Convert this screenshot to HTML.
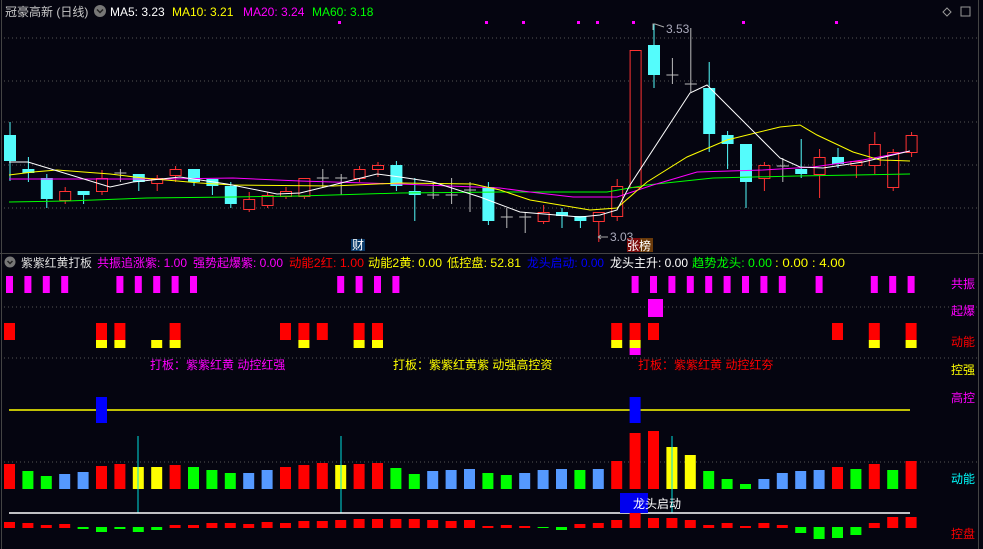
<!DOCTYPE html><html><head><meta charset="utf-8"><style>
body{margin:0;background:#050510;width:983px;height:549px;overflow:hidden;font-family:"Liberation Sans","Noto Sans CJK SC",sans-serif}
svg{position:absolute;left:0;top:0}
text{font-family:"Liberation Sans","Noto Sans CJK SC",sans-serif;font-size:12px}
</style></head><body>
<svg id="s" width="983" height="549" xmlns="http://www.w3.org/2000/svg">
<rect width="983" height="549" fill="#050510"/>
<g id="g"></g>
<line x1="0" y1="253.5" x2="983" y2="253.5" stroke="#444"/>
<line x1="1.5" y1="0" x2="1.5" y2="549" stroke="#444"/>
<line x1="978.5" y1="0" x2="978.5" y2="549" stroke="#444"/>
<text x="5" y="16" fill="#c8c8c8">冠豪高新 (日线)</text>
<circle cx="100" cy="11" r="6" fill="#777"/><path d="M97 9.5l3 3 3-3" stroke="#222" stroke-width="1.5" fill="none"/>
<text x="110" y="16" fill="#fff">MA5: 3.23</text>
<text x="172" y="16" fill="#ff0">MA10: 3.21</text>
<text x="243" y="16" fill="#f0f">MA20: 3.24</text>
<text x="312" y="16" fill="#0f0">MA60: 3.18</text>
<path d="M947 8l4 4-4 4-4-4z" stroke="#999" fill="none"/><rect x="961" y="7" width="9" height="9" stroke="#999" fill="none"/>
<circle cx="10" cy="262" r="5.5" fill="#777"/><path d="M7.5 261l2.5 2.5 2.5-2.5" stroke="#222" stroke-width="1.5" fill="none"/>
<text x="21" y="267" fill="#ddd" textLength="71" lengthAdjust="spacingAndGlyphs">紫紫红黄打板</text>
<text x="97" y="267" fill="#f0f" textLength="90" lengthAdjust="spacingAndGlyphs">共振追涨紫: 1.00</text>
<text x="193" y="267" fill="#f0f" textLength="90" lengthAdjust="spacingAndGlyphs">强势起爆紫: 0.00</text>
<text x="289" y="267" fill="#f00" textLength="75" lengthAdjust="spacingAndGlyphs">动能2红: 1.00</text>
<text x="368" y="267" fill="#ff0" textLength="74" lengthAdjust="spacingAndGlyphs">动能2黄: 0.00</text>
<text x="447" y="267" fill="#ff0" textLength="74" lengthAdjust="spacingAndGlyphs">低控盘: 52.81</text>
<text x="527" y="267" fill="#00f" textLength="77" lengthAdjust="spacingAndGlyphs">龙头启动: 0.00</text>
<text x="610" y="267" fill="#fff" textLength="78" lengthAdjust="spacingAndGlyphs">龙头主升: 0.00</text>
<text x="692" y="267" fill="#0f0" textLength="80" lengthAdjust="spacingAndGlyphs">趋势龙头: 0.00</text>
<text x="775" y="267" fill="#ff0" textLength="70" lengthAdjust="spacingAndGlyphs">: 0.00 : 4.00</text>
<text x="150" y="369" fill="#f0f">打板：紫紫红黄  动控红强</text>
<text x="393" y="369" fill="#ff0">打板：紫紫红黄紫  动强高控资</text>
<text x="638" y="369" fill="#f00">打板：紫紫红黄  动控红夯</text>
<text x="951" y="288" fill="#f0f">共振</text>
<text x="951" y="315" fill="#f0f">起爆</text>
<text x="951" y="346" fill="#f00">动能</text>
<text x="951" y="374" fill="#ff0">控强</text>
<text x="951" y="402" fill="#f0f">高控</text>
<text x="951" y="483" fill="#0ff">动能</text>
<text x="951" y="538" fill="#f00">控盘</text>
<rect x="351" y="239" width="14" height="12" fill="#0a3a6a"/><text x="352" y="249" fill="#fff" font-size="11">财</text>
<rect x="627" y="238" width="13" height="14" fill="#7a0a0a"/><rect x="640" y="238" width="13" height="14" fill="#6a3a0a"/>
<text x="627" y="250" fill="#fff">张榜</text>
<text x="666" y="33" fill="#aab">3.53</text><path d="M653 30v-6h2l9 3" stroke="#aaa" fill="none"/>
<text x="610" y="241" fill="#aab">3.03</text><path d="M598 237h10M598 237l3-2M598 237l3 2" stroke="#aaa" fill="none"/>
<rect x="620" y="493" width="28" height="20" fill="#0000ee"/>
<text x="633" y="508" fill="#fff">龙头启动</text>
</svg>
<script>
const g=document.getElementById('g');let h='';
const X=i=>4+18.4*i;
[38,81,122,165,208,307,358,462].forEach(y=>h+=`<line x1="4" y1="${y}" x2="978" y2="${y}" stroke="#555" stroke-dasharray="1 3"/>`);
[339,486,523,578,597,633,743,836].forEach(x=>h+=`<rect x="${x-1}" y="21" width="3" height="3" fill="#f0f"/>`);
const C=[['c',135,161,122,181],['c',169,173,157,182],['c',178,199,174,208],['r',191,200,187,204],['c',191,195,191,204],['r',178,191,170,195],['x',173,173,169,182],['c',174,182,174,191],['r',178,183,175,191],['r',169,175,166,182],['c',169,182,169,186],['c',179,186,179,195],['c',186,204,182,208],['r',199,209,192,212],['r',195,205,192,208],['r',191,196,187,199],['r',178,196,178,199],['x',178,178,169,187],['x',178,178,174,195],['r',169,178,166,182],['r',165,169,162,177],['c',165,186,161,191],['c',191,195,178,221],['x',195,195,182,199],['x',195,195,178,204],['x',190,190,182,212],['c',187,221,182,225],['x',217,217,208,228],['x',217,217,212,233],['r',212,221,205,224],['c',212,216,208,228],['c',216,221,216,228],['r',212,221,212,242],['r',186,216,179,221],['r',50,187,50,187],['c',45,75,24,88],['x',75,75,58,84],['x',84,84,28,92],['c',88,134,62,152],['c',135,144,131,169],['c',144,182,144,208],['r',165,178,162,191],['x',166,166,158,182],['c',169,174,139,178],['r',157,174,149,198],['c',157,164,148,168],['r',161,165,161,178],['r',144,165,132,174],['r',152,187,149,191],['r',135,152,132,157]];
C.forEach((c,i)=>{const x=X(i),cx=x+6;const col=c[0]=='c'?'#54fcfc':c[0]=='r'?'#ff3232':'#bbb';
h+=`<line x1="${cx}" y1="${c[3]}" x2="${cx}" y2="${c[4]}" stroke="${col}"/>`;
if(c[0]=='c')h+=`<rect x="${x}" y="${c[1]}" width="12" height="${Math.max(1,c[2]-c[1])}" fill="${col}"/>`;
else if(c[0]=='r')h+=`<rect x="${x+.5}" y="${c[1]+.5}" width="11" height="${Math.max(1,c[2]-c[1])}" fill="#050510" stroke="${col}"/>`;
else h+=`<line x1="${x}" y1="${c[1]}" x2="${x+12}" y2="${c[1]}" stroke="${col}"/>`;});
const L=(p,c)=>h+=`<polyline points="${p}" fill="none" stroke="${c}"/>`;
L('9,202 67,201 147,198 233,197 300,196 400,193 500,192 607,192 647,185 713,178 797,176 910,174','#0f0');
L('9,179 167,179 233,178 300,181 400,184 500,188 530,192 573,197 617,197 653,185 697,172 763,170 813,167 863,160 910,151','#f0f');
L('9,175 33,172 57,170 110,174 143,178 200,183 233,185 333,186 400,183 473,184 500,190 530,200 590,210 617,208 647,182 687,157 727,140 780,127 800,125 817,135 853,152 880,160 910,161','#ff0');
L('9,162 28,162 110,187 133,182 180,177 227,184 277,194 300,193 333,185 377,174 400,177 433,182 480,197 520,212 580,217 600,215 617,210 630,185 690,93 707,85 747,125 780,158 800,167 823,168 863,162 910,151','#fff');
[0,1,2,3,6,7,8,9,10,18,19,20,21,34,35,36,37,38,39,40,41,42,44,47,48,49].forEach(i=>h+=`<rect x="${X(i)+2}" y="276" width="7" height="17" fill="#f0f"/>`);
h+=`<rect x="${X(35)}" y="299" width="15" height="18" fill="#f0f"/>`;
[0,5,6,9,15,16,17,19,20,33,34,35,45,47,49].forEach(i=>h+=`<rect x="${X(i)}" y="323" width="11" height="17" fill="#f00"/>`);
[5,6,8,9,16,19,20,33,34,47,49].forEach(i=>h+=`<rect x="${X(i)}" y="340" width="11" height="8" fill="#ff0"/>`);
h+=`<rect x="${X(34)}" y="348" width="11" height="7" fill="#f0f"/>`;
h+=`<line x1="9" y1="410" x2="910" y2="410" stroke="#ff0" stroke-width="1.5"/>`;
[5,34].forEach(i=>h+=`<rect x="${X(i)}" y="397" width="11" height="26" fill="#00f"/>`);
const T=[132,153,168,162,156,138,132,141,141,135,141,150,159,159,150,141,135,129,135,132,129,144,162,153,150,147,159,165,159,150,147,150,147,123,39,33,81,105,153,177,192,177,159,153,150,141,147,132,150,123];
const K='RGGBBRRYYRGGGBBRRRYRRGGBBBGGBBBGBRRRYYGGGBBBBRGRGR';
const M={R:'#f00',G:'#0f0',B:'#59f',Y:'#ff0'};
T.forEach((t,i)=>{const y=420+t/3;h+=`<rect x="${X(i)}" y="${y}" width="11" height="${489-y}" fill="${M[K[i]]}"/>`;});
[138,341,672].forEach(x=>h+=`<line x1="${x}" y1="436" x2="${x}" y2="513" stroke="#0dd"/>`);
h+=`<line x1="9" y1="513" x2="910" y2="513" stroke="#fff" stroke-width="1.5"/>`;
const PP=[6,5,3,4,-2,-5,-2,-5,-3,3,3,5,5,4,6,5,7,7,8,9,9,9,9,8,7,8,2,3,2,-1,-3,4,5,8,17,10,10,8,3,5,2,5,3,-6,-12,-11,-8,5,11,11];
PP.forEach((v,i)=>{if(v>0)h+=`<rect x="${X(i)}" y="${528-v}" width="11" height="${v}" fill="#f00"/>`;else h+=`<rect x="${X(i)}" y="527" width="11" height="${-v}" fill="#0f0"/>`;});
g.innerHTML=h;
</script>
</body></html>
